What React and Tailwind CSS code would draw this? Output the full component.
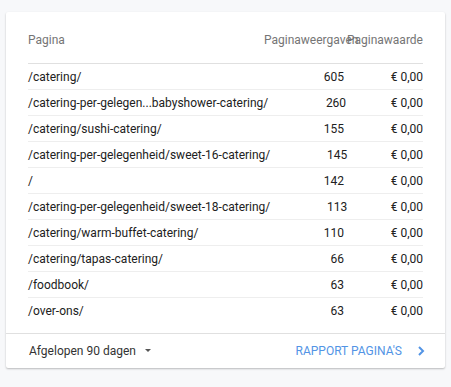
import React from 'react';

const rows = [
    ['/catering/', '605'],
    ['/catering-per-gelegen...babyshower-catering/', '260'],
    ['/catering/sushi-catering/', '155'],
    ['/catering-per-gelegenheid/sweet-16-catering/', '145'],
    ['/', '142'],
    ['/catering-per-gelegenheid/sweet-18-catering/', '113'],
    ['/catering/warm-buffet-catering/', '110'],
    ['/catering/tapas-catering/', '66'],
    ['/foodbook/', '63'],
    ['/over-ons/', '63'],
];

const App = () => {
    return (
        <div className="min-h-[387px] w-[451px] bg-[#f7f8fa] pt-[12px] pl-[6px]" style={{ fontFamily: 'Roboto, "Liberation Sans", sans-serif' }}>
            <div className="w-[439px] h-[356px] bg-white rounded-[2px] shadow-[0_1px_2px_rgba(0,0,0,0.25)] flex flex-col">
                <div className="px-[22px]">
                    <div className="flex pt-[20px] pb-[15px] border-b border-[#e0e0e0] text-[12px] leading-[16px] text-[#757575]">
                        <div className="flex-1">Pagina</div>
                        <div className="w-[80px] text-right whitespace-nowrap">Paginaweergaven</div>
                        <div className="w-[79px] text-right whitespace-nowrap">Paginawaarde</div>
                    </div>
                    {rows.map(([page, views], i) => (
                        <div
                            key={i}
                            className={`flex items-center h-[26px] text-[12px] text-[#212121] ${i < rows.length - 1 ? 'border-b border-[#eeeeee]' : ''}`}
                        >
                            <div className="flex-1 whitespace-nowrap">{page}</div>
                            <div className="w-[80px] text-right">{views}</div>
                            <div className="w-[79px] text-right">€ 0,00</div>
                        </div>
                    ))}
                </div>
                <div className="mt-[9px] border-t border-[#e0e0e0] flex-1 flex items-center justify-between pl-[23px] pr-[18px]">
                    <div className="flex items-center text-[12px] text-[#333333]">
                        <span>Afgelopen 90 dagen</span>
                        <svg width="10" height="5" viewBox="0 0 10 5" className="ml-[7px]">
                            <path d="M0 0 L10 0 L5 5 Z" fill="#555555" transform="translate(2 0) scale(0.6)" />
                        </svg>
                    </div>
                    <div className="flex items-center text-[12px] text-[#5294e5]">
                        <span>RAPPORT PAGINA'S</span>
                        <svg width="12" height="12" viewBox="0 0 12 12" className="ml-[13px]">
                            <path d="M4 2 L8 6 L4 10" fill="none" stroke="#5294e5" strokeWidth="2" />
                        </svg>
                    </div>
                </div>
            </div>
        </div>
    );
};

export default App;
